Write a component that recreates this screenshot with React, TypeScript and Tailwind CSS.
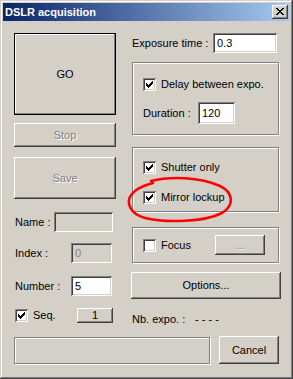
const raised =
  "shadow-[inset_-1px_-1px_#404040,inset_1px_1px_#ffffff,inset_-2px_-2px_#808080,inset_2px_2px_#d4d0c8]";
const sunken =
  "shadow-[inset_1px_1px_#808080,inset_-1px_-1px_#ffffff,inset_2px_2px_#404040,inset_-2px_-2px_#d4d0c8]";
const etched = "border border-[#808080] shadow-[1px_1px_0_#ffffff,inset_1px_1px_0_#ffffff]";
const disabledText = "text-[#808080] [text-shadow:1px_1px_0_#ffffff]";

function Btn({
  label,
  className = "",
  disabled,
}: {
  label: string;
  className?: string;
  disabled?: boolean;
}) {
  return (
    <div
      className={`flex items-center justify-center bg-[#d4d0c8] ${raised} ${
        disabled ? disabledText : "text-black"
      } ${className}`}
    >
      {label}
    </div>
  );
}

function Field({
  value,
  className = "",
  disabled,
}: {
  value?: string;
  className?: string;
  disabled?: boolean;
}) {
  return (
    <div
      className={`flex items-center pl-[4px] ${sunken} ${
        disabled ? "bg-[#d4d0c8] text-[#808080]" : "bg-white text-black"
      } ${className}`}
    >
      {value}
    </div>
  );
}

function Check({ checked }: { checked?: boolean }) {
  return (
    <span className={`relative block w-[13px] h-[13px] shrink-0 bg-white ${sunken}`}>
      {checked && (
        <svg
          className="absolute left-[3px] top-[3px]"
          width="7"
          height="7"
          viewBox="0 0 7 7"
          shapeRendering="crispEdges"
        >
          <path
            fill="#000"
            d="M0 2h1v3h-1zM1 3h1v3h-1zM2 4h1v3h-1zM3 3h1v3h-1zM4 2h1v3h-1zM5 1h1v3h-1zM6 0h1v3h-1z"
          />
        </svg>
      )}
    </span>
  );
}

function CheckRow({ label, checked }: { label: string; checked?: boolean }) {
  return (
    <div className="flex items-center gap-[5px] h-[13px]">
      <Check checked={checked} />
      <span>{label}</span>
    </div>
  );
}

export default function App() {
  return (
    <div className="relative w-[293px] h-[379px] bg-[#d4d0c8] p-[3px] text-[11px] leading-none text-black [font-family:'Liberation_Sans',Arial,sans-serif] shadow-[inset_-1px_-1px_#404040,inset_1px_1px_#d4d0c8,inset_-2px_-2px_#808080,inset_2px_2px_#ffffff]">
      {/* title bar */}
      <div className="flex items-center h-[18px] pl-[2px] pr-[2px] bg-[linear-gradient(to_right,#0a246a,#a6caf0)]">
        <span className="font-bold text-white text-[11px]">DSLR acquisition</span>
        <div className={`relative ml-auto w-[16px] h-[14px] bg-[#d4d0c8] ${raised}`}>
          <svg
            className="absolute left-[4px] top-[3px]"
            width="8"
            height="7"
            viewBox="0 0 8 7"
            shapeRendering="crispEdges"
          >
            <path
              fill="#000"
              d="M0 0h2v1h-2zM6 0h2v1h-2zM1 1h2v1h-2zM5 1h2v1h-2zM2 2h4v1h-4zM3 3h2v1h-2zM2 4h4v1h-4zM1 5h2v1h-2zM5 5h2v1h-2zM0 6h2v1h-2zM6 6h2v1h-2z"
            />
          </svg>
        </div>
      </div>

      <div className="pt-[12px] pl-[11px]">
        <div className="flex h-[303px]">
          {/* left column */}
          <div className="flex flex-col w-[102px]">
            <div
              className={`flex items-center justify-center h-[82px] border border-black bg-[#d4d0c8] shadow-[inset_-1px_-1px_#808080,inset_1px_1px_#ffffff]`}
            >
              GO
            </div>
            <Btn label="Stop" disabled className="mt-[8px] h-[24px]" />
            <Btn label="Save" disabled className="mt-[10px] h-[42px]" />
            <div className="flex items-center mt-[13px] h-[20px]">
              <span className="w-[40px] pl-[1px]">Name :</span>
              <Field disabled className="w-[59px] h-[20px]" />
            </div>
            <div className="flex items-center mt-[11px] h-[20px]">
              <span className="w-[57px] pl-[1px]">Index :</span>
              <Field disabled value="0" className="w-[41px] h-[20px]" />
            </div>
            <div className="flex items-center mt-[13px] h-[20px]">
              <span className="w-[57px] pl-[1px]">Number :</span>
              <Field value="5" className="w-[41px] h-[20px]" />
            </div>
            <div className="flex items-center mt-[12px] h-[15px]">
              <div className="w-[63px] pl-[1px]">
                <CheckRow label="Seq." checked />
              </div>
              <Btn label="1" className="w-[36px] h-[15px]" />
            </div>
          </div>

          {/* right column */}
          <div className="flex flex-col ml-[15px] w-[150px]">
            <div className="flex items-center ml-[1px] w-[145px] h-[20px]">
              <span>Exposure time :</span>
              <Field value="0.3" className="ml-auto w-[64px] h-[20px]" />
            </div>
            <div className={`mt-[9px] ml-[1px] w-[147px] h-[73px] pl-[10px] pt-[15px] ${etched}`}>
              <CheckRow label="Delay between expo." checked />
              <div className="flex items-center mt-[11px] h-[22px]">
                <span className="w-[55px]">Duration :</span>
                <Field value="120" className="w-[37px] h-[22px]" />
              </div>
            </div>
            <div className={`mt-[12px] ml-[1px] w-[147px] h-[65px] pl-[10px] pt-[13px] ${etched}`}>
              <CheckRow label="Shutter only" checked />
              <div className="mt-[17px]">
                <CheckRow label="Mirror lockup" checked />
              </div>
            </div>
            <div className={`mt-[15px] ml-[1px] w-[147px] h-[36px] pl-[10px] pt-[7px] ${etched}`}>
              <div className="flex items-center h-[20px]">
                <div className="w-[72px]">
                  <CheckRow label="Focus" />
                </div>
                <Btn label="..." disabled className="w-[50px] h-[20px]" />
              </div>
            </div>
            <Btn label="Options..." className="mt-[9px] w-[150px] h-[27px]" />
            <div className="flex items-center mt-[13px] ml-[1px] h-[15px]">
              <span className="w-[63px]">Nb. expo. :</span>
              <span>- - - -</span>
            </div>
          </div>
        </div>

        {/* bottom row */}
        <div className="flex items-start">
          <div className={`mt-[1px] w-[196px] h-[27px] ${etched}`} />
          <Btn label="Cancel" className="ml-[9px] w-[60px] h-[28px]" />
        </div>
      </div>

      {/* hand-drawn annotation */}
      <svg
        className="absolute left-0 top-0 pointer-events-none"
        width="293"
        height="379"
        viewBox="0 0 293 379"
      >
        <path
          d="M151 181 C170 176 200 177 220 186 C233 192 235 205 222 213 C205 222 165 223 145 218 C130 214 125 202 132 194 C137 188 145 185 153 183"
          fill="none"
          stroke="#ff0000"
          strokeWidth="2.6"
          strokeLinecap="round"
        />
      </svg>
    </div>
  );
}
